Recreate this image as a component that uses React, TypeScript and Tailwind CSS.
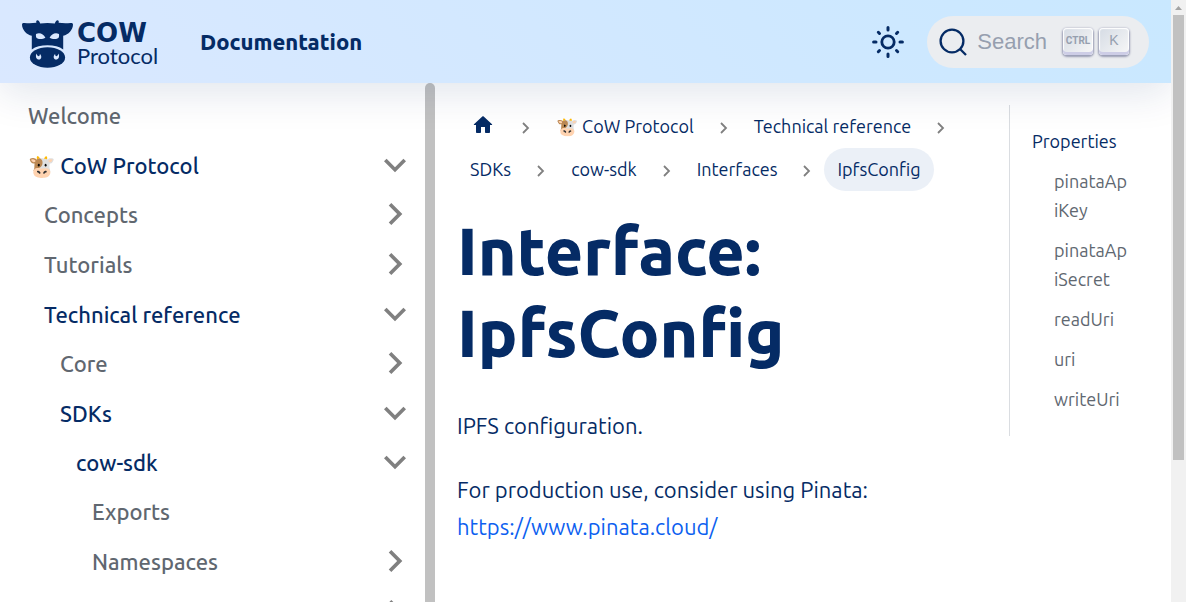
import React from "react";

type NavItem = {
  label: string;
  state?: "open" | "closed";
  cow?: boolean;
  children?: NavItem[];
};

const nav: NavItem[] = [
  { label: "Welcome" },
  {
    label: "CoW Protocol",
    cow: true,
    state: "open",
    children: [
      { label: "Concepts", state: "closed" },
      { label: "Tutorials", state: "closed" },
      {
        label: "Technical reference",
        state: "open",
        children: [
          { label: "Core", state: "closed" },
          {
            label: "SDKs",
            state: "open",
            children: [
              {
                label: "cow-sdk",
                state: "open",
                children: [
                  { label: "Exports" },
                  { label: "Namespaces", state: "closed" },
                  { label: "Enumerations", state: "closed" },
                ],
              },
            ],
          },
        ],
      },
    ],
  },
];

function Chevron({ open }: { open: boolean }) {
  return (
    <svg viewBox="0 0 24 24" className={open ? "size-11" : "size-11 -rotate-90"} fill="#808080" aria-hidden="true">
      <path d="M7.41 8.59 12 13.17l4.59-4.58L18 10l-6 6-6-6z" />
    </svg>
  );
}

function NavList({ items, level }: { items: NavItem[]; level: number }) {
  return (
    <ul className={level === 0 ? "flex flex-col gap-1.5" : "mt-[5px] flex flex-col gap-1.5 pl-4"}>
      {items.map((item) => (
        <li key={item.label}>
          <div
            className={
              "flex h-11 items-center justify-between text-[22px] font-[560] " +
              (item.state === "open" ? "text-[#052b65]" : "text-[#606770]")
            }
          >
            <a href="#" className="whitespace-nowrap">
              {item.cow ? "🐮 " : ""}
              {item.label}
            </a>
            {item.state && (
              <button type="button" aria-label={"Toggle " + item.label}>
                <Chevron open={item.state === "open"} />
              </button>
            )}
          </div>
          {item.children && <NavList items={item.children} level={level + 1} />}
        </li>
      ))}
    </ul>
  );
}

function Logo() {
  return (
    <a href="#" aria-label="CoW Protocol" className="flex items-center gap-1 pt-1">
      <svg viewBox="0 0 51 48" className="h-12 w-[51px]" aria-hidden="true">
        <path
          fill="#052b65"
          d="M0 4.500C0 3.200 1 2.900 2.400 2.900c4 .6 8 .4 12-.1-.5-1.400 0-2.500 1.100-2.500s2.100 1.300 2.700 3.300c4.800-.9 9.800-.9 14.600 0 .6-2 1.600-3.300 2.700-3.300s1.600 1.100 1.100 2.500c4 .5 8 .7 12 .1 1.400 0 2.400.3 2.400 1.600 0 5.200-4.600 10.300-9.800 11.200V29.500c-3.800-2.900-9.200-4.200-15.700-4.200s-11.900 1.300-15.700 4.200V15.700C4.600 14.800 0 9.700 0 4.500z"
        />
        <ellipse cx="25.500" cy="37.500" rx="17.600" ry="10.300" fill="#052b65" />
        <path fill="#dae8ff" d="M14 14c3.800-1.800 7.400 0 9.400 3.800-2.700 1.800-8.800 1.800-9.300-.8-.2-1-.3-2-.1-3zM37 14c-3.800-1.800-7.400 0-9.400 3.800 2.700 1.800 8.800 1.800 9.300-.8.2-1 .3-2 .1-3z" />
        <path fill="#dae8ff" d="M14.300 33.500c-1 3.700.2 6 2.600 6 2.700 0 3.300-3.600 1-5.600-.1 1.400-.6 2.200-1.500 2.300-.9-.4-1.500-1.300-2.100-2.700zM36.700 33.500c1 3.700-.2 6-2.600 6-2.700 0-3.300-3.600-1-5.600.1 1.400.6 2.200 1.500 2.300.9-.4 1.500-1.300 2.100-2.700z" />
      </svg>
      <span className="flex w-[94px] flex-col text-[#052b65]">
        <span className="font-['DejaVu_Sans'] text-[26px] leading-[24px] font-bold">COW</span>
        <span className="font-[Lato] text-[22px] leading-[22px]">Protocol</span>
      </span>
    </a>
  );
}

function Header() {
  return (
    <header className="relative z-10 flex h-[83px] shrink-0 items-center justify-between bg-[linear-gradient(45deg,#dae8ff,#c9e8ff)] px-[22px] shadow-[0_10px_40px_0_rgba(5,43,101,0.12)]">
      <div className="flex items-center gap-[29px]">
        <Logo />
        <a href="#" className="text-[22px] font-extrabold text-[#052b65]">
          Documentation
        </a>
      </div>
      <div className="flex items-center gap-[22px]">
        <button type="button" aria-label="Switch theme" className="text-[#052b65]">
          <svg viewBox="0 0 34 34" className="size-[34px]" fill="none" stroke="currentColor" strokeWidth="3" strokeLinecap="round" aria-hidden="true">
            <circle cx="17" cy="17" r="6.200" strokeWidth="2.800" />
            <path d="M17 2.600v2.400M17 29v2.400M2.600 17h2.400M29 17h2.400M7.300 7.300l1.200 1.200M25.500 25.500l1.200 1.200M7.300 26.700l1.200-1.200M25.500 8.500l1.200-1.200" />
          </svg>
        </button>
        <button type="button" className="flex h-[52px] items-center rounded-full bg-[#ebedf0] pr-5 pl-3 text-[#969faf]">
          <svg viewBox="0 0 28 28" className="size-7 text-[#052b65]" fill="none" stroke="currentColor" strokeWidth="2.300" aria-hidden="true">
            <circle cx="13" cy="13" r="11.400" />
            <path d="M21 21l6 6" />
          </svg>
          <span className="ml-[10px] font-['Liberation_Sans'] text-[22px]">Search</span>
          <span className="ml-4 flex gap-[6px]">
            <kbd className="flex h-[27px] w-[30px] items-center justify-center rounded-[4px] bg-[linear-gradient(-225deg,#d5dbe4,#f8f8f8)] pb-[3px] font-[Roboto] text-[10px] font-bold shadow-[inset_0_-3px_0_0_#cdcde6,inset_0_0_1px_1px_#fff,0_1px_2px_1px_rgba(30,35,90,0.4)]">
              CTRL
            </kbd>
            <kbd className="flex h-[27px] w-[30px] items-center justify-center rounded-[4px] bg-[linear-gradient(-225deg,#d5dbe4,#f8f8f8)] pb-[3px] font-['Liberation_Sans'] text-[14px] shadow-[inset_0_-3px_0_0_#cdcde6,inset_0_0_1px_1px_#fff,0_1px_2px_1px_rgba(30,35,90,0.4)]">
              K
            </kbd>
          </span>
        </button>
      </div>
    </header>
  );
}

const crumbs = ["🐮 CoW Protocol", "Technical reference", "SDKs", "cow-sdk", "Interfaces"];

function Separator() {
  return (
    <svg viewBox="0 0 8 12" className="mx-[13px] mt-0.5 h-3 w-2" fill="none" stroke="#808080" strokeWidth="1.800" aria-hidden="true">
      <path d="M1 1l5 5-5 5" />
    </svg>
  );
}

function Breadcrumbs() {
  return (
    <nav aria-label="Breadcrumbs">
      <ul className="flex flex-wrap text-[18px] font-normal text-[#052b65]">
        <li className="flex h-[43px] items-center">
          <a href="#" aria-label="Home page" className="px-[14px] pb-1">
            <svg viewBox="0 0 24 24" className="size-6" fill="currentColor" aria-hidden="true">
              <path d="M10 19v-5h4v5c0 .55.45 1 1 1h3c.55 0 1-.45 1-1v-7h1.700c.46 0 .68-.57.33-.87L12.670 3.600c-.38-.34-.96-.34-1.340 0l-8.360 7.530c-.34.3-.13.87.33.87H5v7c0 .55.45 1 1 1h3c.55 0 1-.45 1-1z" />
            </svg>
          </a>
          <Separator />
        </li>
        {crumbs.map((c) => (
          <li key={c} className="flex h-[43px] items-center">
            <a href="#" className="px-[13px]">
              {c}
            </a>
            <Separator />
          </li>
        ))}
        <li className="flex h-[43px] items-center rounded-full bg-[#ebf0f7] px-[13px]">IpfsConfig</li>
      </ul>
    </nav>
  );
}

const toc = ["pinataApiKey", "pinataApiSecret", "readUri", "uri", "writeUri"];

export default function App() {
  return (
    <div className="flex h-screen overflow-hidden bg-white font-[Ubuntu,'Noto_Sans',sans-serif]">
      <div className="flex min-w-0 flex-1 flex-col overflow-hidden">
        <Header />
        <div className="flex min-h-0 flex-1">
          <aside className="flex w-[435px] shrink-0 overflow-hidden">
            <nav aria-label="Docs sidebar" className="min-w-0 flex-1 pt-[10px] pr-2 pl-7">
              <NavList items={nav} level={0} />
            </nav>
            <div className="w-[10px] rounded-t-full bg-[#c1c1c1]" />
          </aside>
          <main className="flex min-w-0 flex-1 items-start pt-[22px] pl-[22px]">
            <article className="min-w-0 flex-1 pr-[22px] text-[22px] leading-[37px] font-[450] text-[#052b65]">
              <Breadcrumbs />
              <h1 className="mt-[18px] text-[66px] leading-[82px] font-extrabold">Interface: IpfsConfig</h1>
              <p className="mt-[34px]">IPFS configuration.</p>
              <p className="mt-[27px]">
                For production use, consider using Pinata:{" "}
                <a href="#" className="text-[#0d5ff0]">
                  https://www.pinata.cloud/
                </a>
              </p>
            </article>
            <nav aria-label="Table of contents" className="w-[162px] shrink-0 border-l border-[#dadde1] py-[22px] pr-[42px] pl-[22px] text-[18px] leading-[29px]">
              <a href="#" className="text-[#052b65]">
                Properties
              </a>
              <ul className="mt-[11px] flex flex-col gap-[11px] pl-[22px] break-all text-[#606770]">
                {toc.map((t) => (
                  <li key={t}>
                    <a href="#">{t}</a>
                  </li>
                ))}
              </ul>
            </nav>
          </main>
        </div>
      </div>
      <div aria-hidden="true" className="flex w-[15px] shrink-0 flex-col items-center bg-[#f1f1f1]">
        <svg viewBox="0 0 15 15" className="size-[15px]" fill="#a3a3a3">
          <path d="M4 10l3.500-4L11 10z" />
        </svg>
        <div className="h-[74%] w-[11px] bg-[#c1c1c1]" />
      </div>
    </div>
  );
}
